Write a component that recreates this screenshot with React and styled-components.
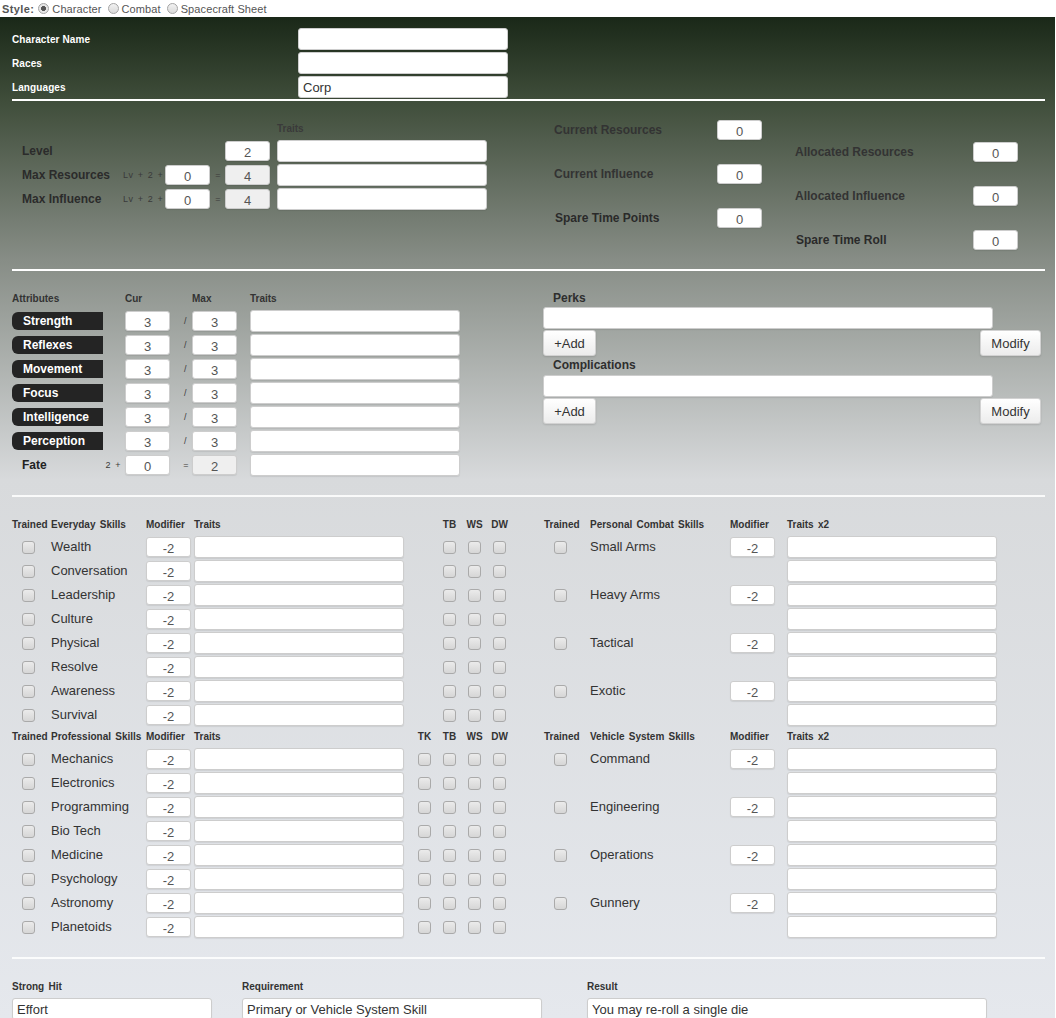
import React from 'react';
import styled, { createGlobalStyle } from 'styled-components';

const Global = createGlobalStyle`
  html, body { margin: 0; padding: 0; background: #fff; }
  body { font-family: "Liberation Sans", Arial, sans-serif; }
  * { box-sizing: border-box; }
`;

const TopBar = styled.div`
  height: 17px;
  display: flex;
  align-items: center;
  padding-left: 2px;
  font-size: 11px;
  color: #555;
  letter-spacing: 0.1px;
`;
const StyleLabel = styled.span`
  font-weight: bold;
  margin-right: 4px;
  letter-spacing: 0.4px;
`;
const RadioOpt = styled.label`
  display: inline-flex;
  align-items: center;
  gap: 3px;
  margin-right: 6px;
`;
const RadioDot = styled.span`
  width: 11px;
  height: 11px;
  border-radius: 50%;
  border: 1px solid #a4a4a4;
  background: ${p => p.$on
    ? 'radial-gradient(circle, #555 0 2.2px, #e6e6e6 2.8px)'
    : 'linear-gradient(#f2f2f2, #d9d9d9)'};
`;

const Sheet = styled.div`
  width: 1055px;
  padding: 0 10px 40px 12px;
  background: linear-gradient(to bottom, #1a2818 0px, #3f4d3a 83px, #878d86 243px, #d8dadc 463px, #e5e8ed 1000px);
`;

const Rule = styled.hr`
  border: 0;
  height: 2px;
  background: #fff;
  margin: 0;
  opacity: ${p => p.$soft ? 0.85 : 1};
`;

const Field = styled.input`
  width: ${p => p.$w || 210}px;
  height: ${p => p.$h || 22}px;
  margin: 0;
  border: 1px solid #cdcdcd;
  border-radius: 3px;
  background: ${p => p.readOnly ? '#efefef' : '#fff'};
  font: 13px "Liberation Sans", Arial, sans-serif;
  color: ${p => p.$center ? '#555' : '#333'};
  padding: ${p => p.$center ? '2px 2px 0' : '0 4px'};
  text-align: ${p => p.$center ? 'center' : 'left'};
  box-shadow: 0 1px 1px rgba(0, 0, 0, 0.08);
  outline: none;
`;

const NumField = (props) => <Field $w={45} $h={20} $center {...props} />;

const Check = styled.input.attrs({ type: 'checkbox' })`
  appearance: none;
  -webkit-appearance: none;
  width: 13px;
  height: 13px;
  margin: 0;
  border: 1px solid #aaa;
  border-radius: 3px;
  background: linear-gradient(#ebebeb, #d6d6d6);
  justify-self: ${p => p.$left ? 'start' : 'center'};
  margin-left: ${p => p.$left ? 10 : 0}px;
`;

/* ---------- identity ---------- */
const Identity = styled.div`
  display: grid;
  grid-template-columns: 286px 210px;
  row-gap: 2px;
  align-items: center;
  padding: 11px 0 1px;
`;
const IdLabel = styled.div`
  color: #fff;
  font-size: 10px;
  font-weight: bold;
  letter-spacing: 0.1px;
`;

/* ---------- stats ---------- */
const Stats = styled.div`
  display: flex;
  padding: 19px 0;
  height: 168px;
`;
const StatsLeft = styled.div`
  width: 542px;
  padding-left: 10px;
  display: grid;
  grid-template-columns: 101px 42px 45px 15px 45px 7px 210px;
  grid-template-rows: 18px repeat(3, 22px);
  row-gap: 2px;
  align-items: center;
  align-content: start;
`;
const Head = styled.div`
  font-size: 10px;
  font-weight: bold;
  color: ${p => p.$dim ? '#3a3a3a' : '#333'};
  word-spacing: 1.5px;
  line-height: 18px;
  align-self: start;
  white-space: nowrap;
  grid-column: ${p => p.$col || 'auto'};
`;
const BigLabel = styled.div`
  font-size: 12px;
  font-weight: bold;
  color: ${p => p.$c || '#2b2b2b'};
  white-space: nowrap;
  grid-column: ${p => p.$col || 'auto'};
  padding-left: ${p => p.$pl || 0}px;
`;
const Tiny = styled.div`
  font-size: 9px;
  color: #3a3a3a;
  letter-spacing: 0.6px;
  word-spacing: 1px;
  white-space: nowrap;
  display: flex;
  justify-content: ${p => p.$end ? 'flex-end' : 'flex-start'};
  padding-right: ${p => p.$pr || 0}px;
  grid-column: ${p => p.$col || 'auto'};
`;
const Cell = styled.div`
  grid-column: ${p => p.$col || 'auto'};
  display: flex;
`;
const StatCol = styled.div`
  width: ${p => p.$w}px;
  padding-top: ${p => p.$top || 0}px;
  display: flex;
  flex-direction: column;
  gap: 24px;
`;
const StatRow = styled.div`
  display: grid;
  grid-template-columns: ${p => p.$lw}px 45px;
  align-items: center;
`;

/* ---------- attributes ---------- */
const AttrSection = styled.div`
  display: flex;
  padding: 19px 0;
`;
const AttrGrid = styled.div`
  width: 531px;
  display: grid;
  grid-template-columns: 113px 45px 22px 45px 13px 210px;
  grid-template-rows: 18px;
  grid-auto-rows: 22px;
  row-gap: 2px;
  align-items: center;
  align-content: start;
`;
const Pill = styled.div`
  width: 91px;
  height: 18px;
  background: #242424;
  border-radius: 6px 0 0 6px;
  color: #fff;
  font-size: 12px;
  font-weight: bold;
  line-height: 18px;
  padding-left: 11px;
`;
const FateCell = styled.div`
  display: flex;
  align-items: center;
  justify-content: space-between;
  padding: 0 4px 0 10px;
`;
const Perks = styled.div`
  width: 498px;
  display: flex;
  flex-direction: column;
`;
const PerkLabel = styled.div`
  font-size: 12px;
  font-weight: bold;
  color: #2e2e2e;
  padding-left: 10px;
  height: ${p => p.$h}px;
  line-height: ${p => p.$h}px;
`;
const BtnRow = styled.div`
  display: flex;
  justify-content: space-between;
  margin-top: 1px;
`;
const Btn = styled.button`
  width: ${p => p.$w}px;
  height: 26px;
  margin: 0;
  padding: 0;
  font: 13px "Liberation Sans", Arial, sans-serif;
  color: #333;
  border: 1px solid #d2d2d2;
  border-radius: 3px;
  background: linear-gradient(#ffffff, #ececec);
  box-shadow: 0 1px 2px rgba(0, 0, 0, 0.12);
`;

/* ---------- skills ---------- */
const SkillSection = styled.div`
  display: flex;
  padding: 19px 0 19px;
`;
const SkillGrid = styled.div`
  width: ${p => p.$w}px;
  display: grid;
  grid-template-columns: ${p => p.$cols};
  row-gap: 2px;
  align-items: center;
  align-content: start;
`;
const SkillName = styled.div`
  font-size: 13px;
  color: #333;
  white-space: nowrap;
  padding-bottom: 2px;
  grid-column: ${p => p.$col || 'auto'};
`;
const HeadCell = styled(Head)`
  height: 18px;
  text-align: ${p => p.$center ? 'center' : 'left'};
`;

/* ---------- result ---------- */
const ResultGrid = styled.div`
  display: grid;
  grid-template-columns: 230px 345px 400px;
  grid-template-rows: 18px 22px;
  row-gap: 2px;
  padding-top: 19px;
`;

const everyday = ['Wealth', 'Conversation', 'Leadership', 'Culture', 'Physical', 'Resolve', 'Awareness', 'Survival'];
const professional = ['Mechanics', 'Electronics', 'Programming', 'Bio Tech', 'Medicine', 'Psychology', 'Astronomy', 'Planetoids'];
const combat = ['Small Arms', 'Heavy Arms', 'Tactical', 'Exotic'];
const vehicle = ['Command', 'Engineering', 'Operations', 'Gunnery'];
const attrs = ['Strength', 'Reflexes', 'Movement', 'Focus', 'Intelligence', 'Perception'];

const LEFT_COLS = '39px 95px 45px 3px 210px 8px 25px 25px 25px 25px';
const RIGHT_COLS = '46px 140px 45px 12px 210px';

function LeftHeader({ title, tk }) {
  return (
    <>
      <HeadCell $col={1}>Trained</HeadCell>
      <HeadCell $col={2}>{title}</HeadCell>
      <HeadCell $col={3}>Modifier</HeadCell>
      <HeadCell $col={5}>Traits</HeadCell>
      <HeadCell $col={7} $center>{tk ? 'TK' : ''}</HeadCell>
      <HeadCell $col={8} $center>TB</HeadCell>
      <HeadCell $col={9} $center>WS</HeadCell>
      <HeadCell $col={10} $center>DW</HeadCell>
    </>
  );
}

function LeftRows({ names, tk }) {
  return names.map((n) => (
    <React.Fragment key={n}>
      <Check $left style={{ gridColumn: 1 }} />
      <SkillName $col={2}>{n}</SkillName>
      <Cell $col={3}><NumField defaultValue="-2" /></Cell>
      <Cell $col={5}><Field /></Cell>
      {tk && <Check style={{ gridColumn: 7 }} />}
      <Check style={{ gridColumn: 8 }} />
      <Check style={{ gridColumn: 9 }} />
      <Check style={{ gridColumn: 10 }} />
    </React.Fragment>
  ));
}

function RightBlock({ title, names }) {
  return (
    <>
      <HeadCell $col={1}>Trained</HeadCell>
      <HeadCell $col={2}>{title}</HeadCell>
      <HeadCell $col={3}>Modifier</HeadCell>
      <HeadCell $col={5}>Traits x2</HeadCell>
      {names.map((n) => (
        <React.Fragment key={n}>
          <Check $left style={{ gridColumn: 1 }} />
          <SkillName $col={2}>{n}</SkillName>
          <Cell $col={3}><NumField defaultValue="-2" /></Cell>
          <Cell $col={5}><Field /></Cell>
          <Cell $col={5}><Field /></Cell>
        </React.Fragment>
      ))}
    </>
  );
}

export default function App() {
  return (
    <>
      <Global />
      <TopBar>
        <StyleLabel>Style:</StyleLabel>
        <RadioOpt><RadioDot $on />Character</RadioOpt>
        <RadioOpt><RadioDot />Combat</RadioOpt>
        <RadioOpt><RadioDot />Spacecraft Sheet</RadioOpt>
      </TopBar>
      <Sheet>
        <Identity>
          <IdLabel>Character Name</IdLabel>
          <Field />
          <IdLabel>Races</IdLabel>
          <Field />
          <IdLabel>Languages</IdLabel>
          <Field defaultValue="Corp" />
        </Identity>
        <Rule />

        <Stats>
          <StatsLeft>
            <Head $col={7} $dim>Traits</Head>
            <BigLabel $col={1}>Level</BigLabel>
            <Cell $col={5}><NumField defaultValue="2" /></Cell>
            <Cell $col={7}><Field /></Cell>

            <BigLabel $col={1}>Max Resources</BigLabel>
            <Tiny $col={2}>Lv + 2 +</Tiny>
            <Cell $col={3}><NumField defaultValue="0" /></Cell>
            <Tiny $col={4} $end $pr={4}>=</Tiny>
            <Cell $col={5}><NumField defaultValue="4" readOnly /></Cell>
            <Cell $col={7}><Field /></Cell>

            <BigLabel $col={1}>Max Influence</BigLabel>
            <Tiny $col={2}>Lv + 2 +</Tiny>
            <Cell $col={3}><NumField defaultValue="0" /></Cell>
            <Tiny $col={4} $end $pr={4}>=</Tiny>
            <Cell $col={5}><NumField defaultValue="4" readOnly /></Cell>
            <Cell $col={7}><Field /></Cell>
          </StatsLeft>
          <StatCol $w={241}>
            <StatRow $lw={163}><BigLabel $c="#333">Current Resources</BigLabel><NumField defaultValue="0" /></StatRow>
            <StatRow $lw={163}><BigLabel $c="#333">Current Influence</BigLabel><NumField defaultValue="0" /></StatRow>
            <StatRow $lw={163}><BigLabel $c="#2a2a2a" $pl={1}>Spare Time Points</BigLabel><NumField defaultValue="0" /></StatRow>
          </StatCol>
          <StatCol $w={230} $top={22}>
            <StatRow $lw={178}><BigLabel $c="#333">Allocated Resources</BigLabel><NumField defaultValue="0" /></StatRow>
            <StatRow $lw={178}><BigLabel $c="#333">Allocated Influence</BigLabel><NumField defaultValue="0" /></StatRow>
            <StatRow $lw={178}><BigLabel $c="#2a2a2a" $pl={1}>Spare Time Roll</BigLabel><NumField defaultValue="0" /></StatRow>
          </StatCol>
        </Stats>
        <Rule />

        <AttrSection>
          <AttrGrid>
            <Head $col={1}>Attributes</Head>
            <Head $col={2}>Cur</Head>
            <Head $col={4}>Max</Head>
            <Head $col={6}>Traits</Head>
            {attrs.map((a) => (
              <React.Fragment key={a}>
                <Cell $col={1}><Pill>{a}</Pill></Cell>
                <Cell $col={2}><NumField defaultValue="3" /></Cell>
                <Tiny $col={3} $end $pr={5}>/</Tiny>
                <Cell $col={4}><NumField defaultValue="3" /></Cell>
                <Cell $col={6}><Field /></Cell>
              </React.Fragment>
            ))}
            <FateCell>
              <BigLabel $c="#222">Fate</BigLabel>
              <Tiny>2 +</Tiny>
            </FateCell>
            <Cell $col={2}><NumField defaultValue="0" /></Cell>
            <Tiny $col={3} $end $pr={3}>=</Tiny>
            <Cell $col={4}><NumField defaultValue="2" readOnly /></Cell>
            <Cell $col={6}><Field /></Cell>
          </AttrGrid>
          <Perks>
            <PerkLabel $h={17}>Perks</PerkLabel>
            <Field $w={450} />
            <BtnRow><Btn $w={53}>+Add</Btn><Btn $w={61}>Modify</Btn></BtnRow>
            <PerkLabel $h={19}>Complications</PerkLabel>
            <Field $w={450} />
            <BtnRow><Btn $w={53}>+Add</Btn><Btn $w={61}>Modify</Btn></BtnRow>
          </Perks>
        </AttrSection>
        <Rule $soft />

        <SkillSection>
          <SkillGrid $w={532} $cols={LEFT_COLS}>
            <LeftHeader title="Everyday Skills" />
            <LeftRows names={everyday} />
            <LeftHeader title="Professional Skills" tk />
            <LeftRows names={professional} tk />
          </SkillGrid>
          <SkillGrid $w={500} $cols={RIGHT_COLS}>
            <RightBlock title="Personal Combat Skills" names={combat} />
            <RightBlock title="Vehicle System Skills" names={vehicle} />
          </SkillGrid>
        </SkillSection>
        <Rule $soft />

        <ResultGrid>
          <Head>Strong Hit</Head>
          <Head>Requirement</Head>
          <Head>Result</Head>
          <Field $w={200} defaultValue="Effort" />
          <Field $w={300} defaultValue="Primary or Vehicle System Skill" />
          <Field $w={400} defaultValue="You may re-roll a single die" />
        </ResultGrid>
      </Sheet>
    </>
  );
}
